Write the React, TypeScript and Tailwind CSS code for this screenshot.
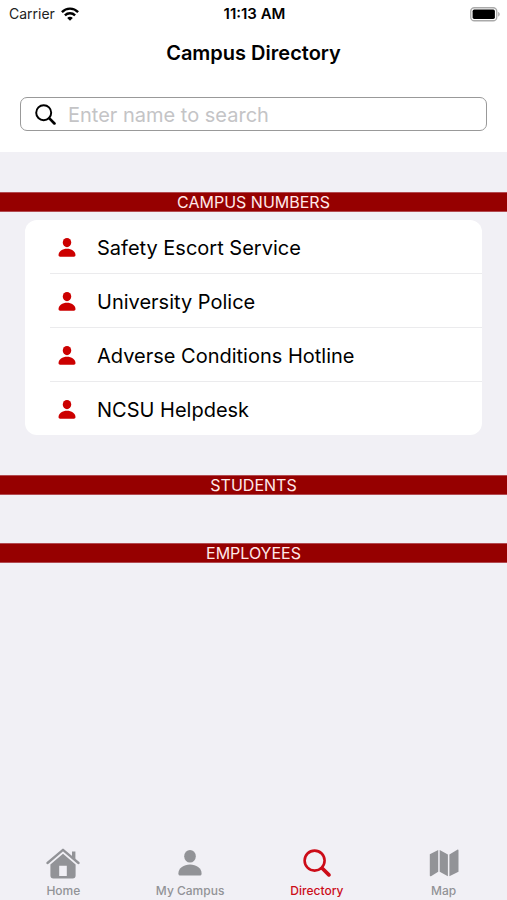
import { useState } from "react";

const contacts = [
  "Safety Escort Service",
  "University Police",
  "Adverse Conditions Hotline",
  "NCSU Helpdesk",
];

function PersonIcon({ className }: { className: string }) {
  return (
    <svg viewBox="0 0 24 26" fill="currentColor" className={className} aria-hidden="true">
      <ellipse cx="12" cy="6.3" rx="5.8" ry="6.3" />
      <path d="M0.4 23.4C0.4 18.2 5.8 14.6 12 14.6s11.6 3.6 11.6 8.8c0 1.600-.8 2.100-2.200 2.100H2.600C1.200 25.500.400 25 .400 23.400Z" />
    </svg>
  );
}

function SearchIcon({ className, weight }: { className: string; weight: number }) {
  return (
    <svg viewBox="0 0 28 28" fill="none" stroke="currentColor" strokeWidth={weight} strokeLinecap="round" className={className} aria-hidden="true">
      <circle cx="11.6" cy="11.6" r="10" />
      <path d="M19.2 19.2l6.700 6.700" strokeWidth={weight * 1.4} />
    </svg>
  );
}

function HomeIcon() {
  return (
    <svg viewBox="0 0 34 31" className="h-[31px] w-[34px]" fill="currentColor" aria-hidden="true">
      <path d="M1.500 15 17 1.800l15.500 13.200" fill="none" stroke="currentColor" strokeWidth="2.300" strokeLinecap="round" strokeLinejoin="round" />
      <path d="M26 3.600h3.400v8L26 8.800Z" />
      <path fillRule="evenodd" d="M17 5.800 29.600 16.600v11a3 3 0 0 1-3 3H7.400a3 3 0 0 1-3-3V16.600ZM13.200 17.800v10.200h7.600V17.800Z" />
    </svg>
  );
}

function MapIcon() {
  return (
    <svg viewBox="0 0 30 28" className="h-7 w-[30px]" fill="currentColor" aria-hidden="true">
      <path d="M.8 5.200 9.200.9v21.800L2 27.200c-.8.4-1.200 0-1.200-.7ZM10.700.9l8.200 4.600v21.700l-8.200-4.500ZM20.400 5.500 28.300.8c.7-.4 1.200-.1 1.200.7v21.300l-9.100 4.400Z" />
    </svg>
  );
}

function StatusBar() {
  return (
    <div className="grid h-7 grid-cols-3 items-center pr-[7px] pl-[9px] text-[14px] leading-5">
      <div className="flex items-center gap-[6px] text-[#222]">
        <span>Carrier</span>
        <svg viewBox="0 0 18 14" className="h-[14px] w-[18px] text-black" fill="none" stroke="currentColor" strokeWidth="2.4" aria-label="Wi-Fi" role="img">
          <path d="M.9 5.1C5.4.5 12.6.5 17.1 5.1M3.9 8.3c2.9-2.8 7.3-2.8 10.2 0" />
          <path d="M9 13.8 6.2 10.9c1.6-1.4 4-1.4 5.6 0Z" fill="currentColor" stroke="none" />
        </svg>
      </div>
      <time className="text-center text-[15px] font-semibold">11:13 AM</time>
      <svg viewBox="0 0 30 15" className="h-[15px] w-[30px] justify-self-end" aria-label="Battery full" role="img">
        <rect x=".75" y=".75" width="26" height="13" rx="3.6" fill="none" stroke="#aaa" strokeWidth="1.3" />
        <rect x="2.6" y="2.6" width="22.3" height="9.3" rx="1.6" />
        <path d="M28.2 5c2 .7 2 3.8 0 4.5Z" fill="#aaa" />
      </svg>
    </div>
  );
}

function SectionHeader({ children }: { children: string }) {
  return (
    <h2 className="flex h-5 items-center justify-center border-y border-[#b24a50] bg-[#960000] text-[16px] leading-[18px] font-normal text-[#ffe9e9]">
      {children}
    </h2>
  );
}

export default function App() {
  const [query, setQuery] = useState("");
  const [tab, setTab] = useState("Directory");
  const tabs = [
    { name: "Home", icon: <HomeIcon /> },
    { name: "My Campus", icon: <PersonIcon className="h-[26px] w-6" /> },
    { name: "Directory", icon: <SearchIcon className="size-7" weight={2.6} /> },
    { name: "Map", icon: <MapIcon /> },
  ];

  return (
    <div className="flex min-h-screen flex-col bg-[#f1f0f5] font-['Inter',sans-serif] text-black">
      <header className="bg-white pb-[21px]">
        <StatusBar />
        <h1 className="pt-[13px] text-center text-[20px] leading-6 font-semibold">Campus Directory</h1>
        <div className="mx-5 mt-8 flex h-[34px] items-center rounded-[7px] border border-[#999] pl-[14px]">
          <label htmlFor="directory-search" aria-label="Search by name" className="pr-3">
            <SearchIcon className="size-[21px]" weight={2.6} />
          </label>
          <input
            id="directory-search"
            type="search"
            value={query}
            onChange={(e) => setQuery(e.target.value)}
            placeholder="Enter name to search"
            className="min-w-0 flex-1 bg-transparent pt-[2px] text-[20px] leading-6 outline-none placeholder:text-[#c4c4c6]"
          />
        </div>
      </header>

      <main className="flex-1 pt-10">
        <section>
          <SectionHeader>CAMPUS NUMBERS</SectionHeader>
          <ul className="mx-[25px] mt-2 mb-10 rounded-[12px] bg-white pl-[25px]">
            {contacts.map((name) => (
              <li key={name} className="border-b border-[#ebebed] last:border-b-0">
                <button type="button" className="flex h-[53px] w-full items-center gap-[21px] pt-[2px] pl-2 text-left text-[20px] leading-6">
                  <PersonIcon className="h-[19px] w-[18px] shrink-0 text-[#cc0000]" />
                  {name}
                </button>
              </li>
            ))}
          </ul>
        </section>
        <section className="mb-12">
          <SectionHeader>STUDENTS</SectionHeader>
        </section>
        <section>
          <SectionHeader>EMPLOYEES</SectionHeader>
        </section>
      </main>

      <nav aria-label="Main" className="grid grid-cols-4 pb-px">
        {tabs.map(({ name, icon }) => (
          <button
            key={name}
            type="button"
            aria-current={tab === name ? "page" : undefined}
            onClick={() => setTab(name)}
            className={`flex flex-col items-center text-[12px] leading-4 font-medium ${tab === name ? "text-[#cc0c18]" : "text-[#929397]"}`}
          >
            <span className="flex h-8 items-center">{icon}</span>
            <span className="mt-1">{name}</span>
          </button>
        ))}
      </nav>
    </div>
  );
}
